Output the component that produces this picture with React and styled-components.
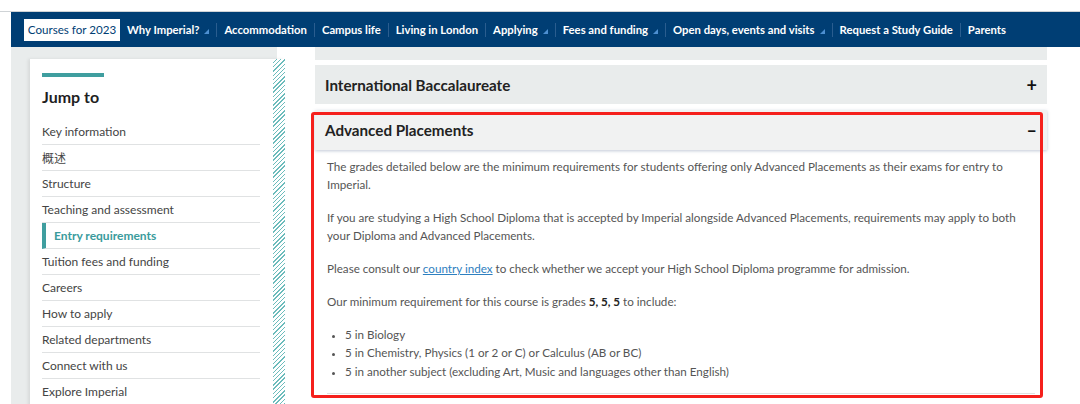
import styled, { createGlobalStyle } from "styled-components";

const GlobalStyle = createGlobalStyle`
  html, body {
    margin: 0;
    padding: 0;
    background: #fff;
    overflow: hidden;
  }
  body {
    font-family: Lato, "Noto Sans", "Noto Sans CJK SC", sans-serif;
    -webkit-font-smoothing: antialiased;
  }
  * {
    box-sizing: border-box;
  }
`;

const Page = styled.div`
  width: 1080px;
  height: 404px;
  overflow: hidden;
`;

const TopStrip = styled.div`
  height: 12px;
  border-bottom: 1px solid #cfd3d6;
`;

const NavBar = styled.nav`
  margin-left: 11px;
  height: 35px;
  background: #003e74;
  display: flex;
  align-items: center;
  padding-left: 13px;
`;

const CurrentTab = styled.div`
  background: #fff;
  color: #003e74;
  font-size: 11.6px;
  height: 22px;
  width: 96px;
  display: flex;
  align-items: center;
  justify-content: center;
`;

const NavItem = styled.div`
  color: #fff;
  font-size: 11.3px;
  font-weight: 700;
  padding: 0 7px;
  display: flex;
  align-items: center;
  gap: 5px;
  border-left: ${(props) => (props.first ? "none" : "1px solid #2a5d8f")};
  line-height: 14px;
`;

const Caret = styled.span`
  width: 0;
  height: 0;
  border-left: 5px solid transparent;
  border-bottom: 5px solid #4d8fd1;
  margin-top: 4px;
`;

const Body = styled.div`
  display: flex;
  align-items: flex-start;
`;

const SideColumn = styled.aside`
  width: 266px;
  margin-left: 11px;
  height: 360px;
  background: #e9ecec;
  padding: 12px 0 0 19px;
`;

const JumpCard = styled.div`
  width: 255px;
  height: 400px;
  border-right: 12px solid transparent;
  background-image: repeating-linear-gradient(
    -45deg,
    #6cbcbc 0px,
    #6cbcbc 1px,
    #fff 1px,
    #fff 3px
  );
  background-origin: border-box;
  box-shadow: -2px 0 3px rgba(0, 0, 0, 0.08);
`;

const CardInner = styled.div`
  background: #fff;
  padding: 14px 0 0 12px;
  height: 100%;
`;

const TealBar = styled.div`
  width: 62px;
  height: 4px;
  background: #3f9e9f;
`;

const JumpTitle = styled.h3`
  margin: 10px 0 12px;
  font-size: 16px;
  line-height: 20px;
  font-weight: 700;
  color: #1f1f1f;
`;

const JumpList = styled.ul`
  list-style: none;
  margin: 0;
  padding: 0;
  width: 218px;
`;

const JumpItem = styled.li`
  height: 26px;
  display: flex;
  align-items: center;
  border-bottom: 1px solid #e0e2e3;
  font-size: 12px;
  color: ${(props) => (props.active ? "#3a9b9c" : "#444")};
  font-weight: ${(props) => (props.active ? 700 : 400)};
  padding-left: ${(props) => (props.active ? "8px" : "0")};
  border-left: ${(props) => (props.active ? "4px solid #3f9e9f" : "none")};
`;

const Main = styled.main`
  width: 732px;
  margin-left: 38px;
`;

const PrevItem = styled.div`
  height: 13px;
  background: #e9ecec;
  margin-bottom: 5px;
`;

const AccordionHeader = styled.div`
  height: ${(props) => (props.open ? "40px" : "39px")};
  background: ${(props) => (props.open ? "#f1f2f2" : "#e9ecec")};
  display: flex;
  align-items: center;
  justify-content: space-between;
  padding: 0 10px;
  font-size: 15.2px;
  font-weight: 700;
  color: #222;
  box-shadow: ${(props) =>
    props.open ? "0 1px 3px rgba(80, 100, 140, 0.35)" : "none"};
`;

const Sign = styled.span`
  font-size: 18px;
  font-weight: 700;
  color: #111;
`;

const Section = styled.section`
  position: relative;
  margin-top: 6px;
`;

const Highlight = styled.div`
  position: absolute;
  left: -4px;
  top: 2px;
  width: 732px;
  height: 286px;
  border: 3px solid #f5201c;
  border-radius: 3px;
  pointer-events: none;
`;

const Content = styled.div`
  padding: 8px 12px 0;
  color: #555;
  font-size: 11.65px;
  line-height: 18px;
`;

const Para = styled.p`
  margin: 0 0 15px;
`;

const Link = styled.a`
  color: #2e80c0;
  text-decoration: underline;
`;

const Strong = styled.b`
  color: #222;
`;

const Bullets = styled.ul`
  margin: 0;
  padding-left: 18px;
  padding-bottom: 12px;
  border-bottom: 1px solid #dfe1e2;
  li {
    line-height: 18.3px;
  }
  li::marker {
    font-size: 10px;
  }
`;

const navItems = [
  { label: "Why Imperial?", caret: true },
  { label: "Accommodation" },
  { label: "Campus life" },
  { label: "Living in London" },
  { label: "Applying", caret: true },
  { label: "Fees and funding", caret: true },
  { label: "Open days, events and visits", caret: true },
  { label: "Request a Study Guide" },
  { label: "Parents" },
];

const jumpItems = [
  "Key information",
  "概述",
  "Structure",
  "Teaching and assessment",
  "Entry requirements",
  "Tuition fees and funding",
  "Careers",
  "How to apply",
  "Related departments",
  "Connect with us",
  "Explore Imperial",
];

const App = () => {
  return (
    <Page>
      <GlobalStyle />
      <TopStrip />
      <NavBar>
        <CurrentTab>Courses for 2023</CurrentTab>
        {navItems.map((item, i) => (
          <NavItem key={item.label} first={i === 0}>
            {item.label}
            {item.caret && <Caret />}
          </NavItem>
        ))}
      </NavBar>
      <Body>
        <SideColumn>
          <JumpCard>
            <CardInner>
              <TealBar />
              <JumpTitle>Jump to</JumpTitle>
              <JumpList>
                {jumpItems.map((label) => (
                  <JumpItem key={label} active={label === "Entry requirements"}>
                    {label}
                  </JumpItem>
                ))}
              </JumpList>
            </CardInner>
          </JumpCard>
        </SideColumn>
        <Main>
          <PrevItem />
          <AccordionHeader>
            International Baccalaureate
            <Sign>+</Sign>
          </AccordionHeader>
          <Section>
            <AccordionHeader open>
              Advanced Placements
              <Sign>–</Sign>
            </AccordionHeader>
            <Content>
              <Para>
                The grades detailed below are the minimum requirements for
                students offering only Advanced Placements as their exams for
                entry to Imperial.
              </Para>
              <Para>
                If you are studying a High School Diploma that is accepted by
                Imperial alongside Advanced Placements, requirements may apply
                to both your Diploma and Advanced Placements.
              </Para>
              <Para>
                Please consult our <Link href="#">country index</Link> to check
                whether we accept your High School Diploma programme for
                admission.
              </Para>
              <Para>
                Our minimum requirement for this course is grades{" "}
                <Strong>5, 5, 5</Strong> to include:
              </Para>
              <Bullets>
                <li>5 in Biology</li>
                <li>5 in Chemistry, Physics (1 or 2 or C) or Calculus (AB or BC)</li>
                <li>
                  5 in another subject (excluding Art, Music and languages other
                  than English)
                </li>
              </Bullets>
            </Content>
            <Highlight />
          </Section>
        </Main>
      </Body>
    </Page>
  );
};

export default App;
